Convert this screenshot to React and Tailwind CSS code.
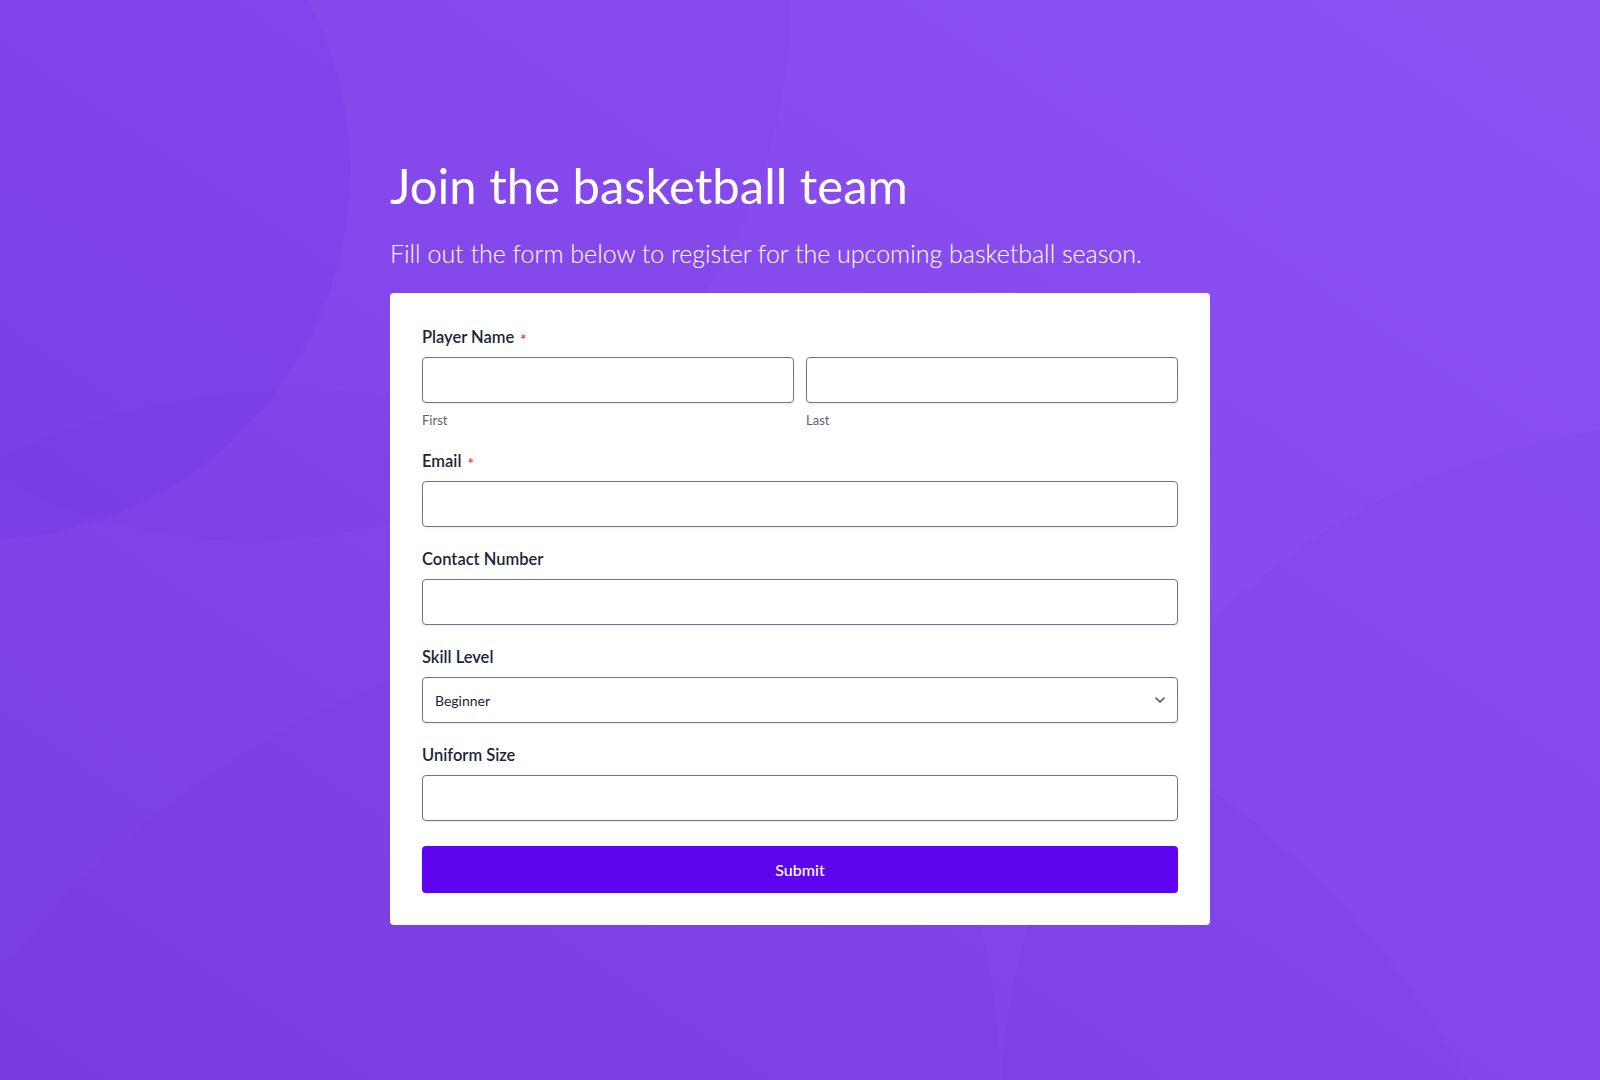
import React from "react";

function Label({ children, required }) {
  return (
    <div className="h-6 mb-2 flex items-center text-[16.5px] font-semibold text-[#1b2538]">
      <span>{children}</span>
      {required && <span className="ml-[6px] mt-[4px] text-[#e2401b] text-[15px] leading-none">*</span>}
    </div>
  );
}

function Input() {
  return (
    <div className="h-[46px] w-full rounded-[4px] border border-[#6f7686] bg-white shadow-[0_1px_2px_rgba(0,0,0,0.08)]" />
  );
}

export default function App() {
  return (
    <div
      className="relative min-h-[1080px] w-full overflow-hidden bg-gradient-to-bl from-[#8d52f2] via-[#8549ec] to-[#7b40e3]"
      style={{ fontFamily: "Lato, 'Noto Sans', sans-serif" }}
    >
      {/* decorative background shapes */}
      <div className="pointer-events-none absolute left-[-390px] top-[-200px] h-[740px] w-[740px] rounded-full bg-[#5b1fd0]/[0.07]" />
      <div className="pointer-events-none absolute left-[-291px] top-[-541px] h-[1082px] w-[1082px] rounded-full bg-[#5b1fd0]/[0.05]" />
      <div className="pointer-events-none absolute left-[-400px] top-[390px] h-[1400px] w-[1400px] rounded-full bg-[#5b1fd0]/[0.05]" />
      <div className="pointer-events-none absolute left-[1000px] top-[423px] h-[1400px] w-[1400px] rounded-full bg-[#5b1fd0]/[0.05]" />
      <div className="pointer-events-none absolute left-[-175px] top-[625px] h-[1750px] w-[1750px] rounded-full bg-[#5b1fd0]/[0.04]" />

      <div className="relative mx-auto w-[820px] pt-[156px] pb-[156px]">
        <h1 className="text-[49px] font-normal leading-[58px] text-white">Join the basketball team</h1>
        <p className="mt-[23px] text-[25px] font-light leading-[32px] text-white">
          Fill out the form below to register for the upcoming basketball season.
        </p>

        <div className="mt-6 rounded-[4px] bg-white px-8 pt-8 pb-8">
          <div className="flex flex-col gap-5">
            <div>
              <Label required>Player Name</Label>
              <div className="flex gap-3">
                <div className="flex-1">
                  <Input />
                  <div className="mt-2 text-[13px] leading-[18px] text-[#5b6270]">First</div>
                </div>
                <div className="flex-1">
                  <Input />
                  <div className="mt-2 text-[13px] leading-[18px] text-[#5b6270]">Last</div>
                </div>
              </div>
            </div>

            <div>
              <Label required>Email</Label>
              <Input />
            </div>

            <div>
              <Label>Contact Number</Label>
              <Input />
            </div>

            <div>
              <Label>Skill Level</Label>
              <div className="flex h-[46px] w-full items-center justify-between rounded-[4px] border border-[#6f7686] bg-white pl-3 pr-3 shadow-[0_1px_2px_rgba(0,0,0,0.08)]">
                <span className="text-[14px] text-[#1b2538]">Beginner</span>
                <svg width="10" height="6" viewBox="0 0 10 6" fill="none">
                  <path d="M1 1l4 4 4-4" stroke="#4b5363" strokeWidth="1.6" strokeLinecap="round" strokeLinejoin="round" />
                </svg>
              </div>
            </div>

            <div>
              <Label>Uniform Size</Label>
              <Input />
            </div>

            <button className="mt-[5px] h-[47px] w-full rounded-[4px] bg-[#5d05ee] text-[16px] font-medium text-white shadow-[0_1px_2px_rgba(0,0,0,0.1)]">
              Submit
            </button>
          </div>
        </div>
      </div>
    </div>
  );
}
